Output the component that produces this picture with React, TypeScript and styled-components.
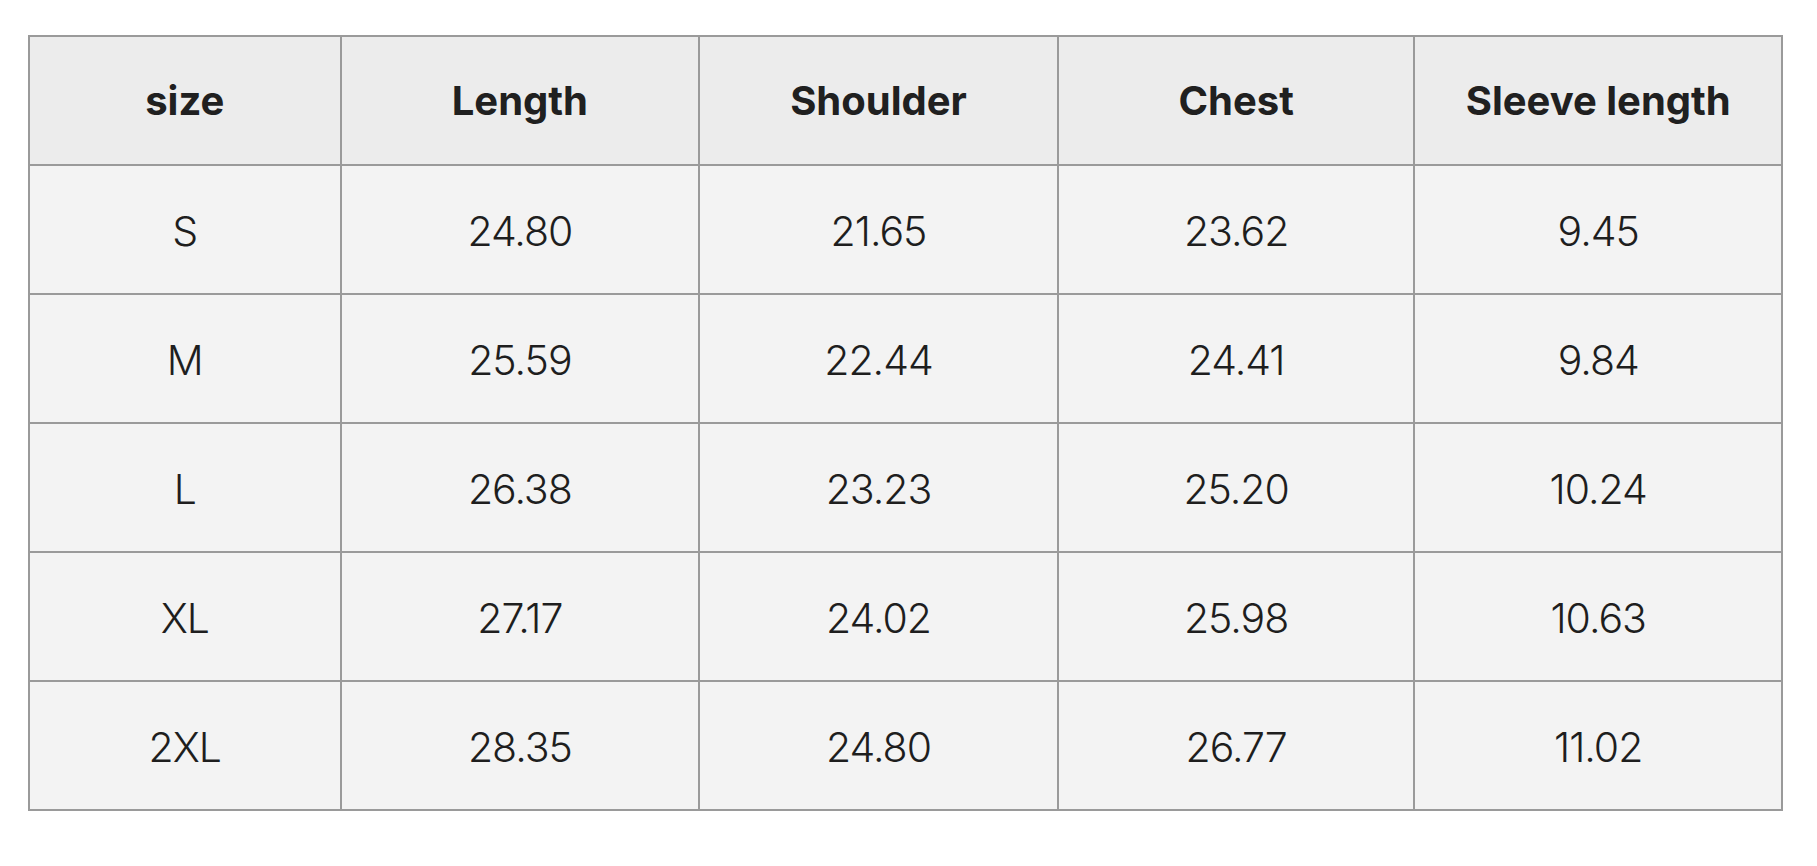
import styled, { createGlobalStyle } from "styled-components";

const GlobalStyle = createGlobalStyle`
  html, body {
    margin: 0;
    padding: 0;
    background: #ffffff;
  }
  body {
    font-family: Inter, "Noto Sans", "Liberation Sans", sans-serif;
    color: #222222;
  }
`;

const Page = styled.div`
  padding: 35px 34px 0 28px;
`;

const SizeTable = styled.table`
  border-collapse: collapse;
  table-layout: fixed;
  border: 2px solid #9a9a9a;
`;

const HeadCell = styled.th<{ w: number }>`
  width: ${(p) => p.w}px;
  height: 127px;
  padding: 0;
  border: 2px solid #9a9a9a;
  background: #ececec;
  font-size: 40px;
  font-weight: 700;
  color: #202020;
  text-align: center;
  vertical-align: middle;
`;

const Cell = styled.td`
  height: 125px;
  padding: 2px 0 0;
  border: 2px solid #9a9a9a;
  background: #f3f3f3;
  font-size: 41px;
  font-weight: 300;
  color: #1e1e1e;
  text-align: center;
  vertical-align: middle;
  letter-spacing: -1px;
`;

const columns = [
  { label: "size", w: 310 },
  { label: "Length", w: 357 },
  { label: "Shoulder", w: 357 },
  { label: "Chest", w: 355 },
  { label: "Sleeve length", w: 366 },
];

const rows = [
  ["S", "24.80", "21.65", "23.62", "9.45"],
  ["M", "25.59", "22.44", "24.41", "9.84"],
  ["L", "26.38", "23.23", "25.20", "10.24"],
  ["XL", "27.17", "24.02", "25.98", "10.63"],
  ["2XL", "28.35", "24.80", "26.77", "11.02"],
];

export default function App() {
  return (
    <>
      <GlobalStyle />
      <Page>
        <SizeTable>
          <thead>
            <tr>
              {columns.map((c) => (
                <HeadCell key={c.label} w={c.w}>
                  {c.label}
                </HeadCell>
              ))}
            </tr>
          </thead>
          <tbody>
            {rows.map((r) => (
              <tr key={r[0]}>
                {r.map((v, i) => (
                  <Cell key={i}>{v}</Cell>
                ))}
              </tr>
            ))}
          </tbody>
        </SizeTable>
      </Page>
    </>
  );
}
